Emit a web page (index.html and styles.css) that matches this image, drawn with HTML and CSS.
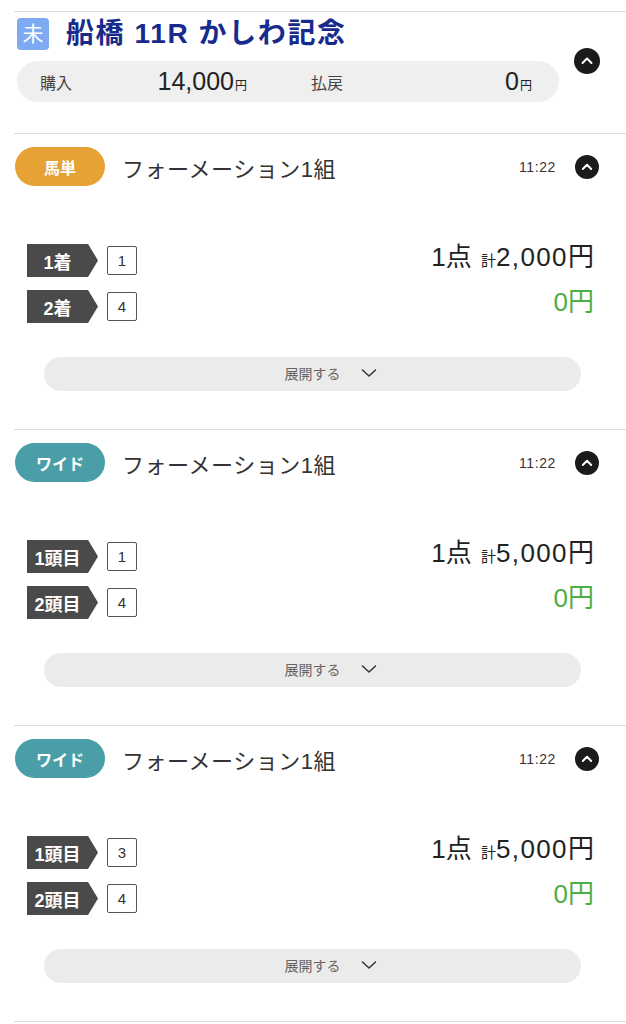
FILE: index.html
```html
<!DOCTYPE html>
<html lang="ja">
<head>
<meta charset="utf-8">
<title>かしわ記念</title>
<link rel="stylesheet" href="styles.css">
</head>
<body>
<div class="page">
  <header class="race">
    <div class="race-main">
      <div class="race-title-row">
        <span class="status-badge">未</span>
        <h1 class="race-title">船橋 11R かしわ記念</h1>
      </div>
      <div class="summary">
        <div class="summary-half summary-left">
          <span class="summary-label">購入</span>
          <span class="summary-value">14,000<small>円</small></span>
        </div>
        <div class="summary-half summary-right">
          <span class="summary-label">払戻</span>
          <span class="summary-value">0<small>円</small></span>
        </div>
      </div>
    </div>
    <button class="circle-btn circle-lg" aria-label="閉じる">
      <svg viewBox="0 0 26 26" width="26" height="26"><path d="M8.5 15 L13 10.5 L17.5 15" fill="none" stroke="#fff" stroke-width="2" stroke-linecap="round" stroke-linejoin="round"/></svg>
    </button>
  </header>

  <section class="bet">
    <div class="bet-head">
      <span class="type-badge type-umatan">馬単</span>
      <span class="bet-title">フォーメーション1組</span>
      <span class="bet-time">11:22</span>
      <button class="circle-btn" aria-label="閉じる">
        <svg viewBox="0 0 24 24" width="24" height="24"><path d="M7.8 14 L12 9.8 L16.2 14" fill="none" stroke="#fff" stroke-width="2" stroke-linecap="round" stroke-linejoin="round"/></svg>
      </button>
    </div>
    <div class="bet-body">
      <div class="picks">
        <div class="pick"><span class="pick-tag">1着</span><span class="pick-num">1</span></div>
        <div class="pick"><span class="pick-tag">2着</span><span class="pick-num">4</span></div>
      </div>
      <div class="amounts">
        <div class="amount-line">1点 <small>計</small><span class="amt">2,000</span>円</div>
        <div class="payout">0円</div>
      </div>
    </div>
    <button class="expand"><span class="expand-inner">展開する<svg viewBox="0 0 16 10" width="16" height="10"><path d="M1.5 2 L8 8 L14.5 2" fill="none" stroke="#333" stroke-width="1.5" stroke-linecap="round" stroke-linejoin="round"/></svg></span></button>
  </section>

  <section class="bet">
    <div class="bet-head">
      <span class="type-badge type-wide">ワイド</span>
      <span class="bet-title">フォーメーション1組</span>
      <span class="bet-time">11:22</span>
      <button class="circle-btn" aria-label="閉じる">
        <svg viewBox="0 0 24 24" width="24" height="24"><path d="M7.8 14 L12 9.8 L16.2 14" fill="none" stroke="#fff" stroke-width="2" stroke-linecap="round" stroke-linejoin="round"/></svg>
      </button>
    </div>
    <div class="bet-body">
      <div class="picks">
        <div class="pick"><span class="pick-tag">1頭目</span><span class="pick-num">1</span></div>
        <div class="pick"><span class="pick-tag">2頭目</span><span class="pick-num">4</span></div>
      </div>
      <div class="amounts">
        <div class="amount-line">1点 <small>計</small><span class="amt">5,000</span>円</div>
        <div class="payout">0円</div>
      </div>
    </div>
    <button class="expand"><span class="expand-inner">展開する<svg viewBox="0 0 16 10" width="16" height="10"><path d="M1.5 2 L8 8 L14.5 2" fill="none" stroke="#333" stroke-width="1.5" stroke-linecap="round" stroke-linejoin="round"/></svg></span></button>
  </section>

  <section class="bet">
    <div class="bet-head">
      <span class="type-badge type-wide">ワイド</span>
      <span class="bet-title">フォーメーション1組</span>
      <span class="bet-time">11:22</span>
      <button class="circle-btn" aria-label="閉じる">
        <svg viewBox="0 0 24 24" width="24" height="24"><path d="M7.8 14 L12 9.8 L16.2 14" fill="none" stroke="#fff" stroke-width="2" stroke-linecap="round" stroke-linejoin="round"/></svg>
      </button>
    </div>
    <div class="bet-body">
      <div class="picks">
        <div class="pick"><span class="pick-tag">1頭目</span><span class="pick-num">3</span></div>
        <div class="pick"><span class="pick-tag">2頭目</span><span class="pick-num">4</span></div>
      </div>
      <div class="amounts">
        <div class="amount-line">1点 <small>計</small><span class="amt">5,000</span>円</div>
        <div class="payout">0円</div>
      </div>
    </div>
    <button class="expand"><span class="expand-inner">展開する<svg viewBox="0 0 16 10" width="16" height="10"><path d="M1.5 2 L8 8 L14.5 2" fill="none" stroke="#333" stroke-width="1.5" stroke-linecap="round" stroke-linejoin="round"/></svg></span></button>
  </section>
  <div class="end-line"></div>
</div>
</body>
</html>
```

FILE: styles.css
```css
* { box-sizing: border-box; }

body {
  margin: 0;
  background: #fff;
  color: #333;
  font-family: "Liberation Sans", "Noto Sans CJK JP", sans-serif;
}

.page {
  padding-top: 11px;
  padding-left: 14px;
}

button {
  font-family: inherit;
  border: 0;
  padding: 0;
  cursor: pointer;
}

/* race header */
.race {
  border-top: 1px solid #dcdcdc;
  display: flex;
  align-items: flex-start;
  padding: 6px 26px 31px 3px;
}

.race-main {
  flex: 1;
}

.race-title-row {
  display: flex;
  align-items: center;
  height: 32px;
}

.status-badge {
  width: 32px;
  height: 32px;
  border-radius: 4px;
  background: #7ea9f3;
  color: #fff;
  font-size: 21px;
  line-height: 32px;
  text-align: center;
}

.race-title {
  margin: 0 0 0 17px;
  font-size: 28px;
  font-weight: 700;
  color: #172b8d;
  line-height: 32px;
  letter-spacing: 1.6px;
}

.summary {
  margin-top: 11px;
  height: 41px;
  width: 542px;
  background: #efefef;
  border-radius: 21px;
  display: flex;
}

.summary-half {
  flex: 0 0 50%;
  display: flex;
  align-items: center;
  justify-content: space-between;
}

.summary-left { padding: 0 41px 0 23px; }
.summary-right { padding: 0 27px 0 23px; }

.summary-label {
  font-size: 16px;
  color: #444;
}

.summary-value {
  font-size: 25px;
  color: #222;
}

.summary-value small {
  font-size: 12px;
  margin-left: 1px;
}

.circle-btn {
  width: 24px;
  height: 24px;
  border-radius: 50%;
  background: #1b1b1b;
  display: flex;
  align-items: center;
  justify-content: center;
  flex: none;
}

.circle-lg {
  width: 26px;
  height: 26px;
  margin-top: 30px;
  margin-left: 15px;
}

/* bet sections */
.bet {
  border-top: 1px solid #dcdcdc;
  padding: 13px 0 38px 0;
}

.bet-head {
  display: flex;
  align-items: center;
  height: 39px;
  padding-left: 1px;
  padding-right: 27px;
}

.type-badge {
  width: 90px;
  height: 39px;
  border-radius: 20px;
  color: #fff;
  font-weight: 700;
  font-size: 16px;
  display: flex;
  align-items: center;
  justify-content: center;
  flex: none;
}

.type-umatan { background: #e6a234; }
.type-wide { background: #4a9ea8; }

.bet-title {
  margin-left: 17px;
  font-size: 22px;
  color: #333;
  flex: 1;
  letter-spacing: 0.5px;
}

.bet-time {
  font-size: 14px;
  letter-spacing: 0.6px;
  color: #333;
  margin-right: 19px;
}

.bet-body {
  margin-top: 58px;
  display: flex;
  justify-content: space-between;
  align-items: flex-start;
  padding-left: 13px;
  padding-right: 32px;
}

.picks {
  display: flex;
  flex-direction: column;
  gap: 13px;
}

.pick {
  display: flex;
  align-items: center;
  gap: 9px;
  height: 33px;
}

.pick-tag {
  width: 71px;
  height: 33px;
  background: #4a4a4a;
  color: #fff;
  font-weight: 700;
  font-size: 18px;
  display: flex;
  align-items: center;
  justify-content: center;
  padding-right: 10px;
  clip-path: polygon(0 0, 86% 0, 100% 50%, 86% 100%, 0 100%);
}

.pick-num {
  width: 30px;
  height: 29px;
  border: 1px solid #555;
  border-radius: 2px;
  font-size: 15px;
  color: #333;
  display: flex;
  align-items: center;
  justify-content: center;
}

.amounts {
  text-align: right;
}

.amount-line {
  font-size: 26px;
  line-height: 26px;
  color: #222;
}

.amount-line small {
  font-size: 15px;
  margin-left: 2px;
}

.amt {
  letter-spacing: 1.4px;
}

.payout {
  margin-top: 13px;
  font-size: 26px;
  line-height: 30px;
  color: #4cad45;
}

.expand {
  display: flex;
  align-items: center;
  justify-content: center;
  margin-top: 34px;
  margin-left: 30px;
  width: 537px;
  height: 34px;
  border-radius: 17px;
  background: #ebebeb;
  color: #666;
  font-size: 14px;
}

.expand-inner {
  display: inline-flex;
  align-items: center;
  gap: 20px;
  padding-left: 36px;
  padding-bottom: 3px;
}

.end-line {
  border-top: 1px solid #dcdcdc;
}
```
